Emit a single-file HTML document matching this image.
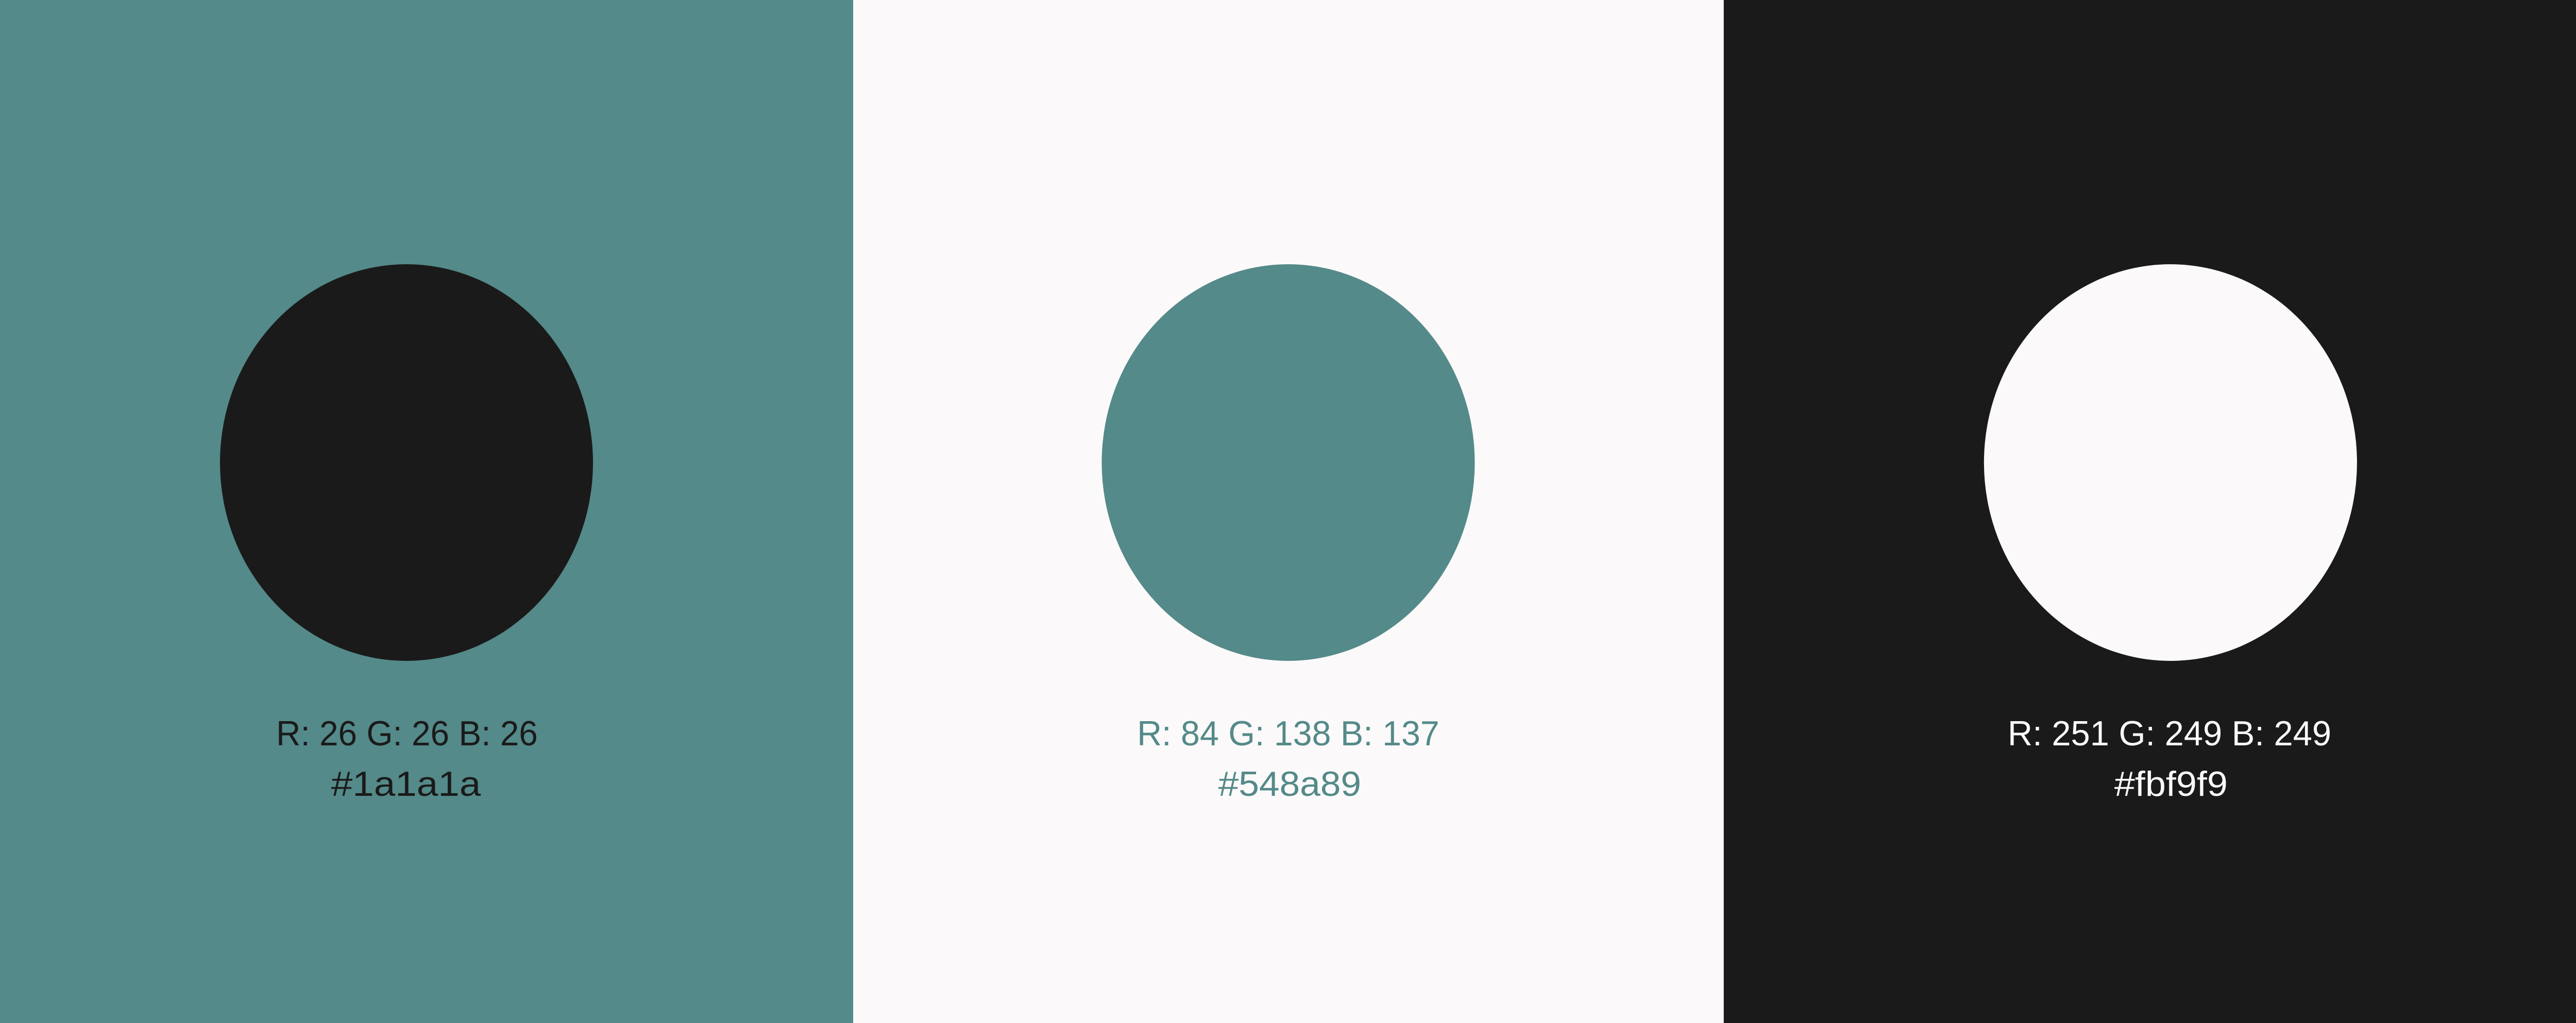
<!DOCTYPE html>
<html><head><meta charset="utf-8"><style>
html,body{margin:0;padding:0;width:100%;height:100%;overflow:hidden;background:#1a1a1a}
svg{display:block;width:100vw;height:100vh}
text{font-family:"Liberation Sans",sans-serif;font-size:68px;text-anchor:middle}
</style></head><body>
<svg viewBox="0 0 5317 1986" preserveAspectRatio="none">
<rect x="0" y="0" width="1761" height="1986" fill="#548a89"/>
<rect x="1761" y="0" width="1797" height="1986" fill="#fbf9f9"/>
<rect x="3558" y="0" width="1759" height="1986" fill="#1a1a1a"/>
<circle cx="839" cy="898" r="385" fill="#1a1a1a"/>
<circle cx="2659" cy="898" r="385" fill="#548a89"/>
<circle cx="4480" cy="898" r="385" fill="#fbf9f9"/>
<g fill="#1a1a1a">
<text x="840" y="1447" textLength="540" lengthAdjust="spacingAndGlyphs">R: 26 G: 26 B: 26</text>
<text x="838" y="1545" textLength="309" lengthAdjust="spacingAndGlyphs">#1a1a1a</text>
</g>
<g fill="#548a89">
<text x="2659" y="1447" textLength="624" lengthAdjust="spacingAndGlyphs">R: 84 G: 138 B: 137</text>
<text x="2662" y="1545" textLength="295" lengthAdjust="spacingAndGlyphs">#548a89</text>
</g>
<g fill="#fbf9f9">
<text x="4478" y="1447" textLength="668" lengthAdjust="spacingAndGlyphs">R: 251 G: 249 B: 249</text>
<text x="4481" y="1545" textLength="234" lengthAdjust="spacingAndGlyphs">#fbf9f9</text>
</g>
</svg>
</body></html>
